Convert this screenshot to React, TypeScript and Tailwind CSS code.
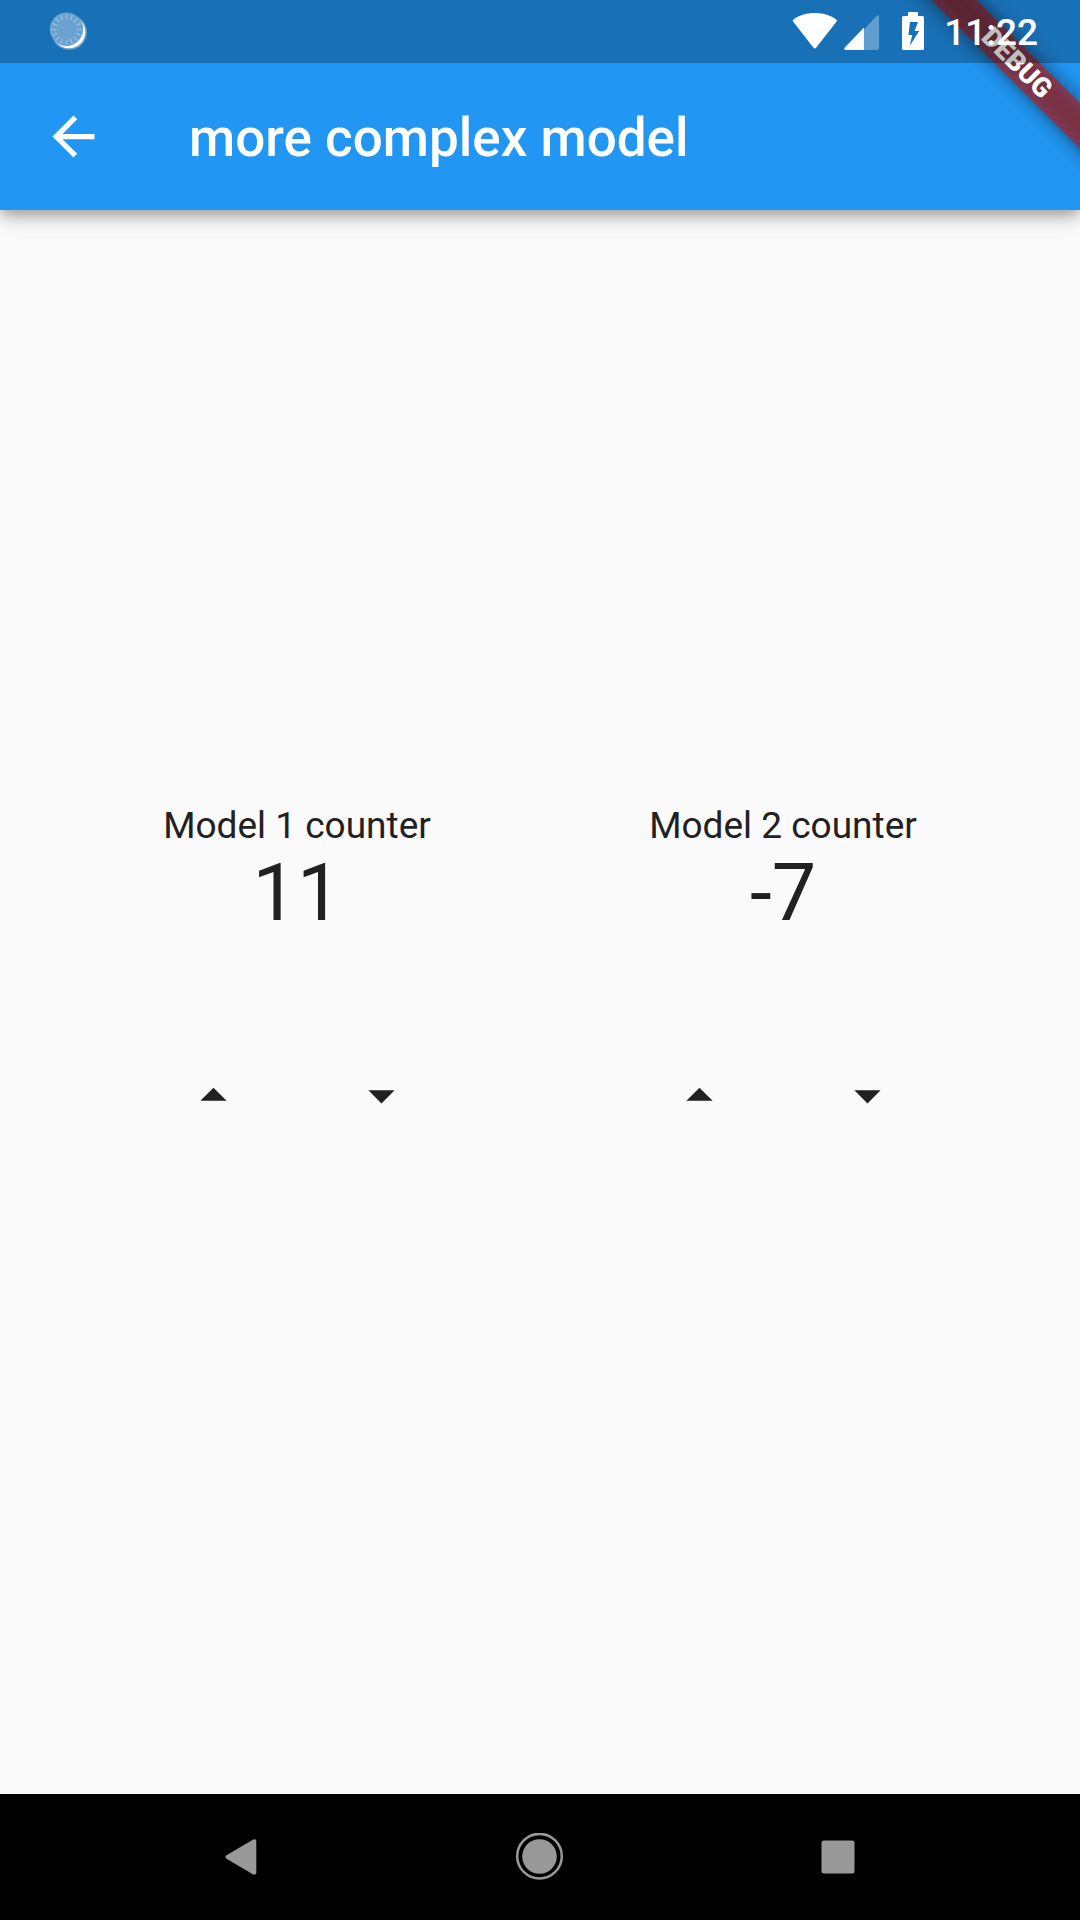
import { useState } from "react";

function SyncIcon() {
  const ticks = Array.from({ length: 16 }, (_, i) => i * 22.5);
  return (
    <svg viewBox="0 0 40 40" className="size-10" aria-hidden="true">
      <circle cx="20.3" cy="21.2" r="17.6" fill="#ffffff" opacity="0.35" />
      <circle cx="20" cy="21" r="16.3" fill="#ffffff" />
      <circle cx="17.5" cy="18.2" r="16.7" fill="#69a2d0" />
      {ticks.map((a) => (
        <line
          key={a}
          x1="17.5"
          y1="3.5"
          x2="17.5"
          y2="7.8"
          stroke="#93bbdd"
          strokeWidth="1.5"
          strokeLinecap="round"
          transform={`rotate(${a} 17.5 18.5)`}
        />
      ))}
    </svg>
  );
}

function WifiIcon() {
  return (
    <svg viewBox="0 0 46 38" className="h-[38px] w-[46px]" fill="#ffffff" aria-hidden="true">
      <path d="M1.2 9.8 Q0 8.500 1.400 7.400 C7.500 3 15 1 22.700 1 C30.500 1 38 3 44.200 7.400 Q45.600 8.500 44.400 9.800 L24.300 35.600 Q22.800 37.600 21.300 35.600 Z" />
    </svg>
  );
}

function SignalIcon() {
  return (
    <svg viewBox="0 0 36 38" className="h-[38px] w-9" fill="#ffffff" aria-hidden="true">
      <path d="M20 17.5 L32.500 4 Q35 2 35 5 V36 Q35 38 33 38 H20 Z" opacity="0.32" />
      <path d="M20 15.500 V38 H1.500 Q-0.500 38 0.800 35.600 Z" />
    </svg>
  );
}

function BatteryIcon() {
  return (
    <svg viewBox="0 0 22 38" className="h-[38px] w-[22px]" fill="#ffffff" aria-hidden="true">
      <path
        fillRule="evenodd"
        d="M6 0 H16 V4 H20.5 Q22 4 22 5.5 V36.5 Q22 38 20.5 38 H1.5 Q0 38 0 36.5 V5.5 Q0 4 1.5 4 H6 Z M8 10 L6.5 23 H10.3 L7.6 34 L17.2 19 H12.6 L16 10 Z"
      />
    </svg>
  );
}

function DebugBanner() {
  return (
    <div className="pointer-events-none absolute top-0 right-0 z-10 size-[210px] overflow-hidden">
      <div className="absolute top-[47px] right-[-87px] h-8 w-[300px] rotate-45">
        <div className="absolute inset-0 bg-black/50 blur-[10px]" />
        <div className="absolute inset-0 flex items-center justify-center bg-[#b71c1c]/63 text-[27px] leading-8 font-black text-white">
          DEBUG
        </div>
      </div>
    </div>
  );
}

function Counter({ label, start }: { label: string; start: number }) {
  const [value, setValue] = useState(start);
  return (
    <section className="flex flex-col items-center px-[42px] pb-[42px]">
      <h2 className="text-[37px] leading-[43px]">{label}</h2>
      <output className="text-[79px] leading-[92px]">{value}</output>
      <div className="mt-[93px] flex gap-[42px]">
        <button
          type="button"
          aria-label={`Increase ${label}`}
          onClick={() => setValue(value + 1)}
          className="flex size-[126px] items-center justify-center"
        >
          <svg viewBox="0 0 24 24" className="size-[63px]" fill="currentColor">
            <path d="M7 14l5-5 5 5z" />
          </svg>
        </button>
        <button
          type="button"
          aria-label={`Decrease ${label}`}
          onClick={() => setValue(value - 1)}
          className="flex size-[126px] items-center justify-center"
        >
          <svg viewBox="0 0 24 24" className="size-[63px]" fill="currentColor">
            <path d="M7 10l5 5 5-5z" />
          </svg>
        </button>
      </div>
    </section>
  );
}

export default function App() {
  return (
    <div className="flex min-h-screen flex-col bg-[#fafafa] font-[Roboto,sans-serif] text-[#212121]">
      <header className="relative z-10 bg-[#2196f3] text-white shadow-[0_5px_10px_-3px_rgba(0,0,0,0.2),0_10px_13px_rgba(0,0,0,0.14),0_3px_26px_rgba(0,0,0,0.12)]">
        <div className="relative z-20 flex h-[63px] items-center justify-between bg-black/25 pr-[42px] pb-px pl-[49px]">
          <SyncIcon />
          <div className="flex items-center">
            <WifiIcon />
            <div className="ml-1.5">
              <SignalIcon />
            </div>
            <div className="ml-[22px]">
              <BatteryIcon />
            </div>
            <time className="ml-5 pt-1 text-[37px] leading-[42px] font-medium">11:22</time>
          </div>
        </div>
        <div className="flex h-[147px] items-center">
          <button type="button" aria-label="Back" className="flex size-[147px] items-center justify-center">
            <svg viewBox="0 0 24 24" className="size-[63px]" fill="currentColor">
              <path d="M20 11H7.830l5.590-5.590L12 4l-8 8 8 8 1.410-1.410L7.830 13H20v-2z" />
            </svg>
          </button>
          <h1 className="ml-[42px] pt-[3px] text-[53px] leading-[62px] font-medium">more complex model</h1>
        </div>
        <DebugBanner />
      </header>

      <main className="flex flex-1 items-center justify-evenly">
        <Counter label="Model 1 counter" start={11} />
        <Counter label="Model 2 counter" start={-7} />
      </main>

      <nav aria-label="System" className="grid h-[126px] grid-cols-3 bg-black px-[93px] text-[#999999]">
        <button type="button" aria-label="Back" className="flex items-center justify-center">
          <svg viewBox="0 0 48 48" className="size-12" fill="currentColor">
            <path d="M8.500 22.300 L34.800 6.700 Q38.300 5.400 38.300 8.500 V39.500 Q38.300 42.500 34.800 41.300 L8.500 25.700 Q6.300 24 8.500 22.300 Z" />
          </svg>
        </button>
        <button type="button" aria-label="Home" className="flex items-center justify-center">
          <svg viewBox="0 0 48 48" className="size-12" fill="currentColor">
            <circle cx="23.500" cy="23.200" r="22.300" fill="none" stroke="currentColor" strokeWidth="2.500" />
            <circle cx="23.500" cy="23.500" r="17.300" />
          </svg>
        </button>
        <button type="button" aria-label="Overview" className="flex items-center justify-center">
          <svg viewBox="0 0 48 48" className="size-12" fill="currentColor">
            <rect x="7.500" y="7.500" width="33" height="33" rx="2.500" />
          </svg>
        </button>
      </nav>
    </div>
  );
}
